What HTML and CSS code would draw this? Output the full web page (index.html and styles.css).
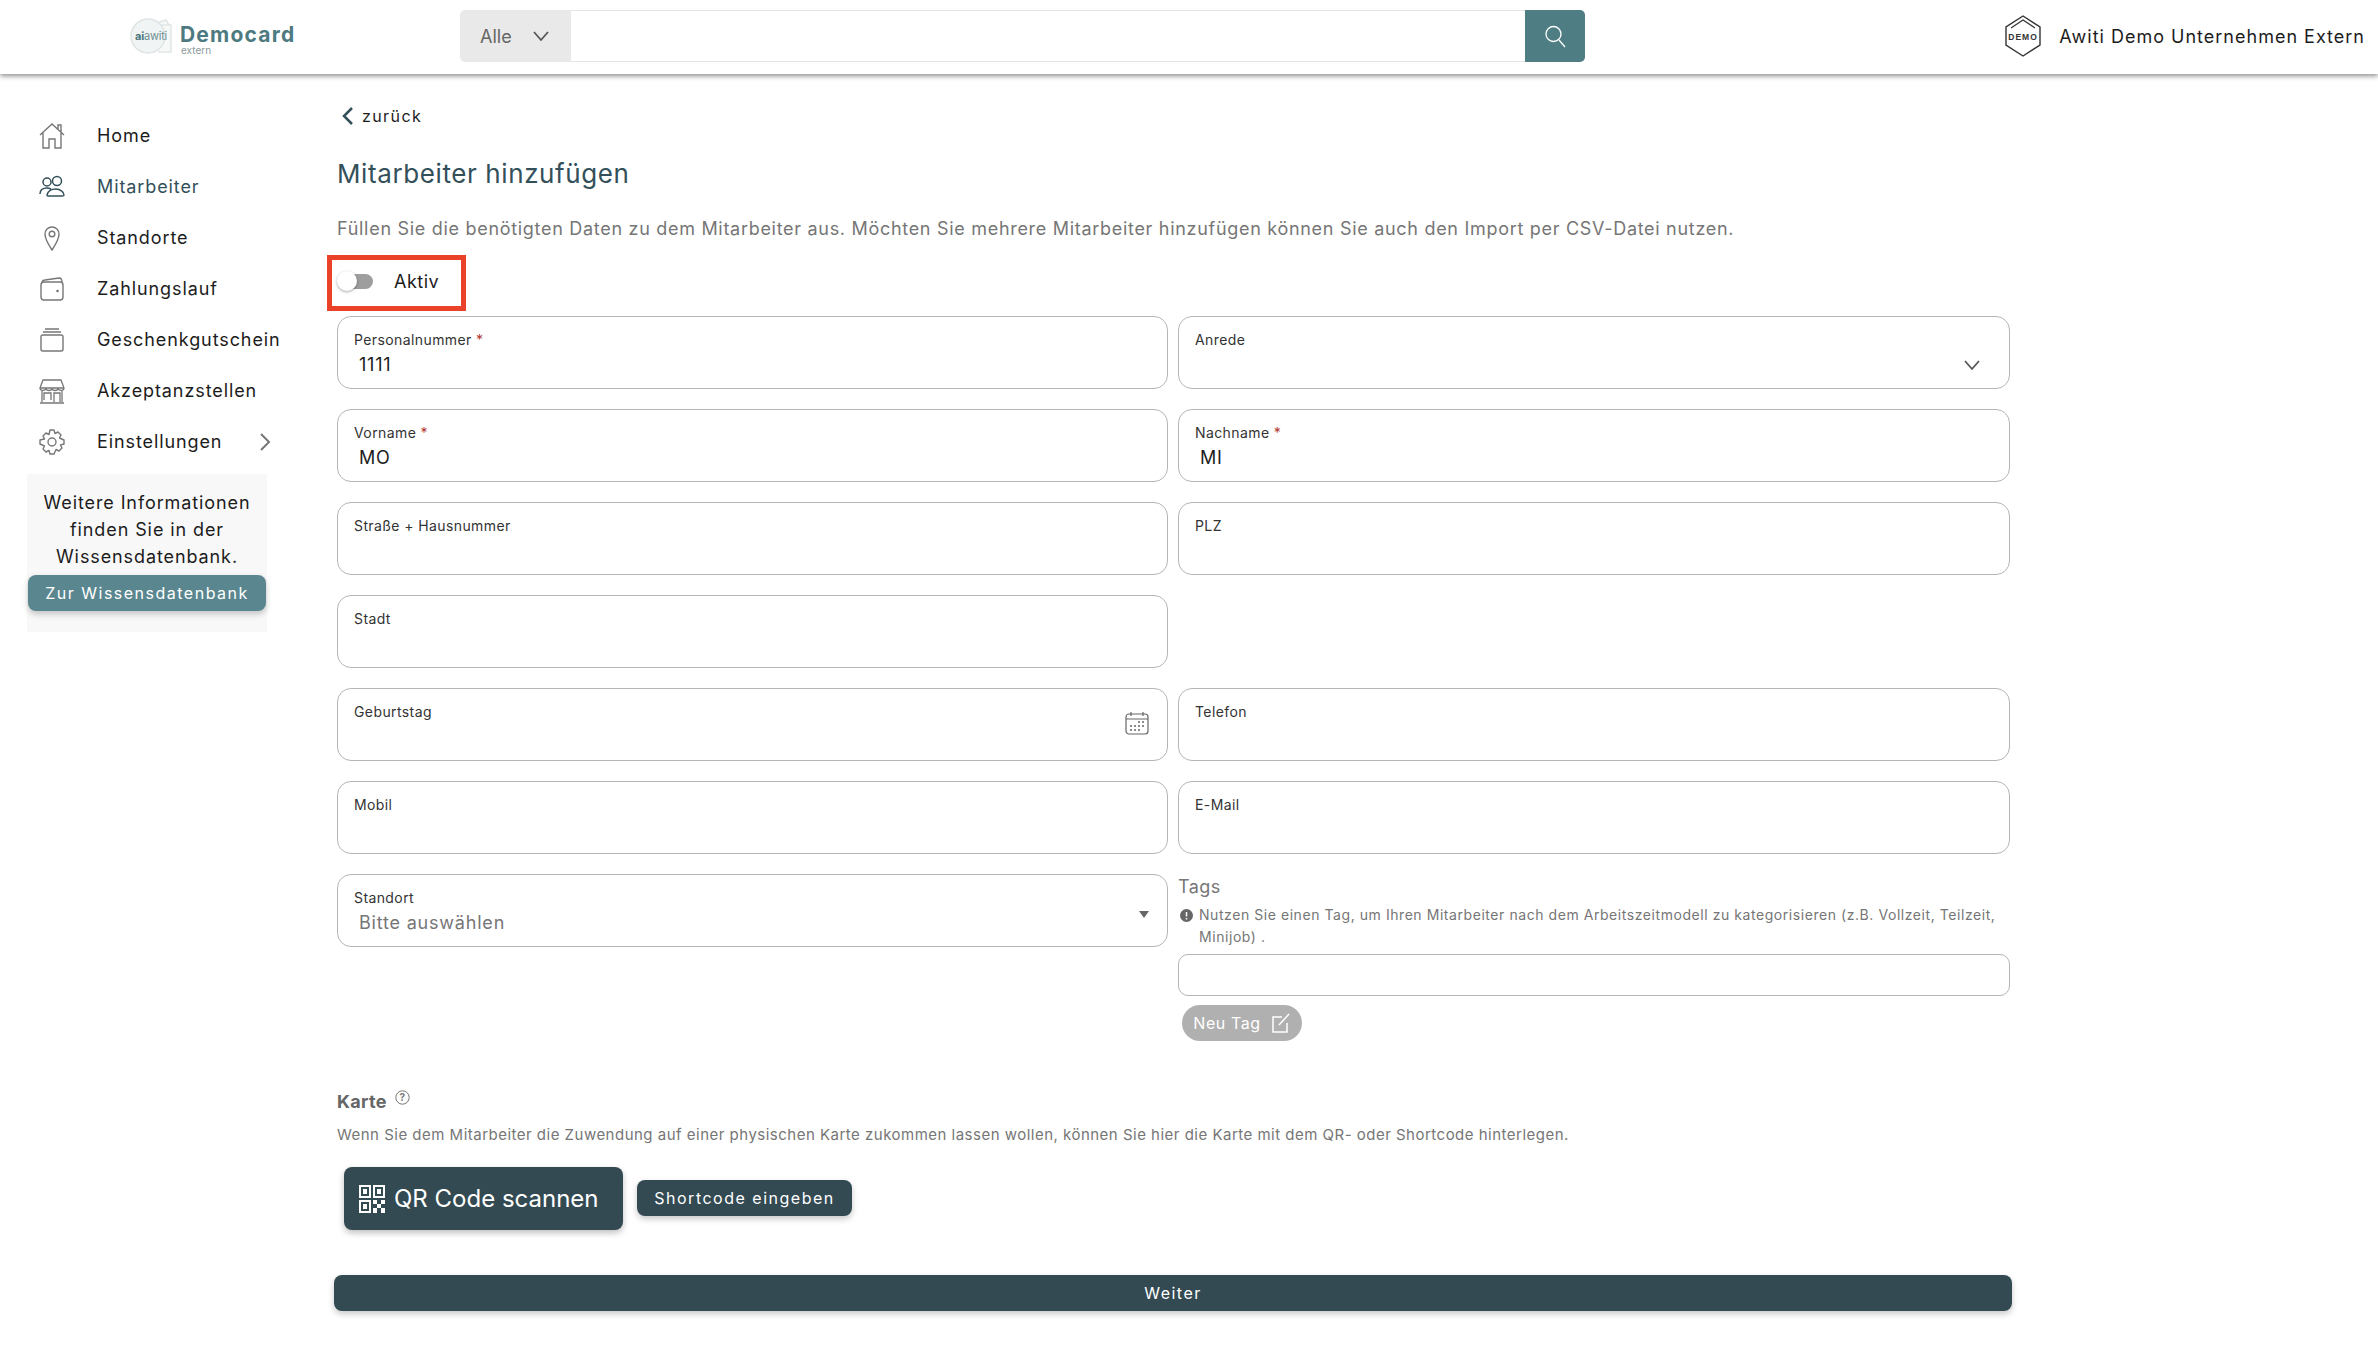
FILE: index.html
```html
<!DOCTYPE html>
<html lang="de">
<head>
<meta charset="utf-8">
<title>Mitarbeiter hinzufügen</title>
<link rel="stylesheet" href="styles.css">
</head>
<body>
<header class="topbar">
  <div class="brand">
    <div class="brand-mark">
      <svg class="brand-svg" width="46" height="36" viewBox="0 0 46 36"><path d="M24 6l12-4 3 5M28 7h13v27H28" fill="#f7f8f8" stroke="#e1e6e6" stroke-width="1.5"/><circle cx="18" cy="18" r="17" fill="#f1f4f4" stroke="#dfe5e5" stroke-width="1.5"/></svg>
      <span class="brand-awiti"><b>ai</b>awiti</span>
    </div>
    <div class="brand-text"><span class="brand-name">Democard</span><span class="brand-sub">extern</span></div>
  </div>
  <div class="search">
    <div class="search-select"><span>Alle</span>
      <svg width="18" height="12" viewBox="0 0 18 12"><path d="M2 2l7 8 7-8" fill="none" stroke="#555" stroke-width="1.8"/></svg>
    </div>
    <div class="search-input"></div>
    <div class="search-btn">
      <svg width="24" height="24" viewBox="0 0 24 24"><circle cx="10.5" cy="10" r="7.5" fill="none" stroke="#fff" stroke-width="1.3"/><path d="M16 16l6 7" stroke="#fff" stroke-width="1.3"/></svg>
    </div>
  </div>
  <div class="account">
    <svg width="38" height="42" viewBox="0 0 38 42"><path d="M19 1l17 11v18L19 41 2 30V12z" fill="#fff" stroke="#333" stroke-width="1.4"/><path d="M7 13L19 5l12 8" fill="none" stroke="#333" stroke-width="1.2"/><text class="demo-text" x="19" y="24.5" text-anchor="middle">DEMO</text></svg>
    <span>Awiti Demo Unternehmen Extern</span>
  </div>
</header>

<div class="page">
  <aside class="sidebar">
    <nav class="nav">
      <a class="nav-item">
        <svg class="nav-icon" viewBox="0 0 26 26"><path d="M1 12L13 1l12 11M4 10v15h6v-9h6v9h6V10M19 6V2h3v7" fill="none" stroke="#777" stroke-width="1.4"/></svg>
        <span>Home</span></a>
      <a class="nav-item nav-active">
        <svg class="nav-icon" viewBox="0 0 26 26"><circle cx="8" cy="8" r="4" fill="none" stroke="#33505a" stroke-width="1.5"/><circle cx="18" cy="7" r="4.5" fill="none" stroke="#33505a" stroke-width="1.5"/><path d="M1 20c0-4 3-6 7-6 2 0 3 .5 4 1M8 21c1-4 5-6 9-6s8 3 8 6c0 1-1 1-2 1H9c-1 0-1-1-1-1z" fill="none" stroke="#33505a" stroke-width="1.5"/></svg>
        <span>Mitarbeiter</span></a>
      <a class="nav-item">
        <svg class="nav-icon" viewBox="0 0 26 26"><path d="M13 25C9 19 6 14 6 9a7 7 0 0 1 14 0c0 5-3 10-7 16z" fill="none" stroke="#777" stroke-width="1.4"/><circle cx="13" cy="9" r="2.8" fill="none" stroke="#777" stroke-width="1.4"/></svg>
        <span>Standorte</span></a>
      <a class="nav-item">
        <svg class="nav-icon" viewBox="0 0 26 26"><rect x="2" y="6" width="22" height="18" rx="3" fill="none" stroke="#777" stroke-width="1.4"/><path d="M3 7c0-2 1-3 3-3l14-2c2 0 3 1 3 4" fill="none" stroke="#777" stroke-width="1.4"/><circle cx="18.500" cy="15" r="1.300" fill="#777"/></svg>
        <span>Zahlungslauf</span></a>
      <a class="nav-item">
        <svg class="nav-icon" viewBox="0 0 26 26"><rect x="2" y="8" width="22" height="16" rx="2" fill="none" stroke="#777" stroke-width="1.4"/><path d="M4 5h18M6 2h14" stroke="#777" stroke-width="1.4"/></svg>
        <span>Geschenkgutschein</span></a>
      <a class="nav-item">
        <svg class="nav-icon" viewBox="0 0 26 26"><path d="M3 24V13M23 24V13M1 25h24M1 10l3-8h18l3 8c0 3-4 3-6 1-1 2-5 2-6 0-1 2-5 2-6 0-2 2-6 2-6-1zM5 22v-7h7v7M15 24v-9h6v9M1 10h24" fill="none" stroke="#777" stroke-width="1.3"/></svg>
        <span>Akzeptanzstellen</span></a>
      <a class="nav-item">
        <svg class="nav-icon" viewBox="0 0 26 26"><circle cx="13" cy="13" r="4" fill="none" stroke="#777" stroke-width="1.4"/><path d="M11 1h4l1 3.500 3-1.500 3 3-1.500 3L25 11v4l-3.500 1 1.500 3-3 3-3-1.500L15 25h-4l-1-3.500L7 23l-3-3 1.500-3L1 15v-4l4.500-1L4 7l3-3 3 1.500z" fill="none" stroke="#777" stroke-width="1.4" stroke-linejoin="round"/></svg>
        <span>Einstellungen</span>
        <svg class="nav-chevron" width="12" height="20" viewBox="0 0 12 20"><path d="M2 2l8 8-8 8" fill="none" stroke="#777" stroke-width="2"/></svg>
      </a>
    </nav>
    <div class="info">
      <p>Weitere Informationen finden Sie in der Wissensdatenbank.</p>
      <button class="btn btn-teal">Zur Wissensdatenbank</button>
    </div>
  </aside>

  <main class="main">
    <a class="back">
      <svg width="12" height="20" viewBox="0 0 12 20"><path d="M10 2l-8 8 8 8" fill="none" stroke="#33505a" stroke-width="2.500"/></svg>
      <span>zurück</span></a>
    <h1 class="title">Mitarbeiter hinzufügen</h1>
    <p class="lead">Füllen Sie die benötigten Daten zu dem Mitarbeiter aus. Möchten Sie mehrere Mitarbeiter hinzufügen können Sie auch den Import per CSV-Datei nutzen.</p>
    <div class="toggle-box">
      <span class="toggle"><span class="knob"></span></span>
      <span class="toggle-label">Aktiv</span>
    </div>

    <div class="form">
      <div class="field"><label>Personalnummer <em>*</em></label><div class="value">1111</div></div>
      <div class="field"><label>Anrede</label>
        <svg class="field-chevron" width="18" height="12" viewBox="0 0 18 12"><path d="M2 2l7 8 7-8" fill="none" stroke="#555" stroke-width="1.8"/></svg>
      </div>
      <div class="field"><label>Vorname <em>*</em></label><div class="value">MO</div></div>
      <div class="field"><label>Nachname <em>*</em></label><div class="value">MI</div></div>
      <div class="field"><label>Straße + Hausnummer</label></div>
      <div class="field"><label>PLZ</label></div>
      <div class="field"><label>Stadt</label></div>
      <div class="spacer"></div>
      <div class="field"><label>Geburtstag</label>
        <svg class="field-cal" width="24" height="24" viewBox="0 0 24 24"><rect x="1" y="3" width="22" height="20" rx="3" fill="none" stroke="#666" stroke-width="1.200"/><path d="M1 8h22M6 1v4M18 1v4" stroke="#666" stroke-width="1.200"/><path d="M13 11h2M17 11h2M5 15h2M9 15h2M13 15h2M17 15h2M5 19h2M9 19h2M13 19h2" stroke="#666" stroke-width="1.600"/></svg>
      </div>
      <div class="field"><label>Telefon</label></div>
      <div class="field"><label>Mobil</label></div>
      <div class="field"><label>E-Mail</label></div>
      <div class="field"><label>Standort</label><div class="value value-muted">Bitte auswählen</div><span class="caret"></span></div>
      <div class="tags">
        <div class="tags-title">Tags</div>
        <div class="tags-hint">
          <svg class="hint-icon" width="13" height="13" viewBox="0 0 13 13"><circle cx="6.500" cy="6.500" r="6.500" fill="#666"/><path d="M6.500 3v4.500M6.500 9v1.500" stroke="#fff" stroke-width="1.500"/></svg>
          <span>Nutzen Sie einen Tag, um Ihren Mitarbeiter nach dem Arbeitszeitmodell zu kategorisieren (z.B. Vollzeit, Teilzeit, Minijob) .</span>
        </div>
        <div class="tags-input"></div>
        <button class="tag-btn">Neu Tag
          <svg width="20" height="20" viewBox="0 0 20 20"><path d="M11 4H2v15h14v-9" fill="none" stroke="#fff" stroke-width="1.500"/><path d="M8 12L18 1" stroke="#fff" stroke-width="1.500"/></svg>
        </button>
      </div>
    </div>

    <h2 class="card-title">Karte
      <svg class="help" width="15" height="15" viewBox="0 0 15 15"><circle cx="7.500" cy="7.500" r="6.700" fill="none" stroke="#777"/><text class="help-text" x="7.500" y="11" text-anchor="middle">?</text></svg>
    </h2>
    <p class="card-text">Wenn Sie dem Mitarbeiter die Zuwendung auf einer physischen Karte zukommen lassen wollen, können Sie hier die Karte mit dem QR- oder Shortcode hinterlegen.</p>
    <div class="card-actions">
      <button class="btn-qr">
        <svg width="26" height="28" viewBox="0 0 26 28"><g fill="none" stroke="#fff" stroke-width="2"><rect x="1" y="1" width="10" height="11"/><rect x="15" y="1" width="10" height="11"/><rect x="1" y="16" width="10" height="11"/></g><g fill="#fff"><rect x="4" y="4" width="4" height="5"/><rect x="18" y="4" width="4" height="5"/><rect x="4" y="19" width="4" height="5"/><rect x="14" y="15" width="4" height="4"/><rect x="22" y="15" width="4" height="4"/><rect x="18" y="19" width="4" height="4"/><rect x="14" y="23" width="4" height="5"/><rect x="22" y="23" width="4" height="5"/></g></svg>
        <span>QR Code scannen</span>
      </button>
      <button class="btn btn-dark btn-short">Shortcode eingeben</button>
    </div>
    <button class="btn btn-dark btn-wide">Weiter</button>
  </main>
</div>
</body>
</html>
```
FILE: styles.css
```css
* { box-sizing: border-box; }
html, body { margin: 0; padding: 0; background: #fff; }
body { font-family: Inter, "Liberation Sans", sans-serif; color: #1c1c1c; font-size: 18px; width: 2378px; height: 1366px; overflow: hidden; }
button { font-family: inherit; border: 0; cursor: pointer; }

.topbar { height: 74px; padding-bottom: 2px; display: flex; align-items: center; background: #fff; box-shadow: 0 2px 5px rgba(0,0,0,.45); position: relative; }
.brand { width: 460px; padding-left: 130px; display: flex; align-items: center; gap: 4px; }
.brand-mark { position: relative; width: 46px; height: 36px; flex: none; }
.brand-svg { display: block; }
.brand-awiti { position: absolute; left: 5px; top: 11px; font-size: 11px; line-height: 14px; color: #6d8f94; letter-spacing: -.2px; }
.brand-awiti b { color: #49757b; }
.brand-text { display: flex; flex-direction: column; line-height: 1; margin-top: 6px; }
.brand-name { font-size: 21px; font-weight: 700; color: #4d7a80; letter-spacing: 1.2px; }
.brand-sub { font-size: 10px; color: #8a9a9c; margin-left: 1px; }

.search { width: 1125px; height: 52px; display: flex; }
.search-select { width: 111px; background: #e9e9e9; border-radius: 5px 0 0 5px; display: flex; align-items: center; justify-content: space-between; padding: 0 21px 0 20px; color: #666; font-size: 18px; }
.search-input { flex: 1; border: 1px solid #e4e4e4; border-left: 0; border-right: 0; }
.search-btn { width: 60px; background: #4f7d84; border-radius: 0 5px 5px 0; display: flex; align-items: center; justify-content: center; }
.account { margin-left: auto; padding-right: 13px; display: flex; align-items: center; gap: 17px; font-size: 18px; letter-spacing: 1px; }
.demo-text { font-family: "Liberation Sans", sans-serif; font-size: 8.500px; font-weight: 700; fill: #333; }

.page { display: flex; align-items: flex-start; }
.sidebar { width: 337px; flex: none; padding-top: 36px; }
.nav-item { height: 51px; display: flex; align-items: center; padding: 0 66px 0 39px; font-size: 18px; letter-spacing: .9px; color: #1c1c1c; }
.nav-active { color: #33505a; }
.nav-icon { width: 26px; height: 26px; flex: none; margin-right: 32px; }
.nav-chevron { margin-left: auto; }
.info { width: 240px; height: 158px; margin: 7px 0 0 27px; background: #f8f8f8; padding-top: 15px; display: flex; flex-direction: column; align-items: center; }
.info p { margin: 0 0 5px; width: 230px; text-align: center; line-height: 27px; font-size: 18px; letter-spacing: .9px; }
.btn { border-radius: 8px; color: #fff; font-size: 16px; letter-spacing: 1.5px; height: 36px; box-shadow: 0 3px 6px rgba(0,0,0,.22); }
.btn-teal { width: 238px; background: #5a878f; }
.btn-dark { background: #334a53; }
.btn-short { width: 215px; margin-bottom: 1px; }

.main { width: 1673px; padding-top: 29px; }
.back { display: flex; align-items: center; gap: 8px; height: 26px; padding-left: 5px; font-size: 16px; letter-spacing: 1.4px; }
.title { margin: 27px 0 0; font-size: 26px; line-height: 36px; font-weight: 400; color: #33505a; letter-spacing: .6px; }
.lead { margin: 24px 0 0; font-size: 18px; line-height: 26px; color: #767676; letter-spacing: .7px; white-space: nowrap; }
.toggle-box { margin: 13px 0 5px -10px; width: 139px; height: 56px; border: 5px solid #ea4228; display: flex; align-items: center; padding: 0 0 3px 8px; }
.toggle { position: relative; width: 30px; height: 15px; background: #9e9e9e; border-radius: 8px; margin-left: 3px; }
.knob { position: absolute; left: -6px; top: -3px; width: 20px; height: 20px; border-radius: 50%; background: #fff; box-shadow: 0 1px 3px rgba(0,0,0,.35); }
.toggle-label { margin-left: 21px; letter-spacing: .5px; }

.form { display: grid; grid-template-columns: 831px 832px; column-gap: 10px; row-gap: 20px; align-items: start; }
.field { position: relative; height: 73px; border: 1px solid #b5b5b5; border-radius: 14px; padding: 15px 16px 0; }
.field label { display: block; font-size: 14px; line-height: 16px; color: #333; letter-spacing: .4px; }
.field em { color: #b03a2e; font-style: normal; }
.value { margin: 4px 0 0 5px; font-size: 18px; line-height: 26px; letter-spacing: .8px; }
.value-muted { color: #767676; }
.field-chevron { position: absolute; right: 28px; top: 42px; }
.field-cal { position: absolute; right: 18px; top: 22px; }
.caret { position: absolute; right: 18px; top: 36px; border: 5px solid transparent; border-top: 7px solid #666; border-bottom: 0; }
.tags-title { font-size: 18px; line-height: 26px; color: #767676; letter-spacing: .4px; }
.tags-hint { display: flex; margin-top: 4px; font-size: 14px; line-height: 22px; color: #767676; letter-spacing: .56px; }
.hint-icon { flex: none; margin: 5px 6px 0 2px; }
.tags-input { margin-top: 6px; height: 42px; border: 1px solid #b5b5b5; border-radius: 10px; }
.tag-btn { margin: 9px 0 0 4px; width: 120px; height: 36px; border-radius: 18px; background: #b0b0b0; color: #fff; font-size: 16px; letter-spacing: .6px; display: flex; align-items: center; justify-content: center; gap: 10px; }

.card-title { margin: 48px 0 0; font-size: 18px; line-height: 26px; font-weight: 700; color: #666; letter-spacing: .3px; display: flex; align-items: flex-start; gap: 8px; }
.help { margin-top: 1px; }
.help-text { font-size: 10px; fill: #777; }
.card-text { margin: 10px 0 0; font-size: 15px; line-height: 20px; color: #767676; letter-spacing: .49px; white-space: nowrap; }
.card-actions { margin: 22px 0 0 7px; display: flex; align-items: center; gap: 14px; }
.btn-qr { width: 279px; height: 63px; padding: 0 0 0 15px; background: #334a53; border-radius: 8px; color: #fff; font-size: 24px; letter-spacing: 0; display: flex; align-items: center; justify-content: flex-start; gap: 9px; box-shadow: 0 3px 6px rgba(0,0,0,.25); }
.btn-wide { display: block; width: 1678px; margin: 45px 0 0 -3px; }
```
